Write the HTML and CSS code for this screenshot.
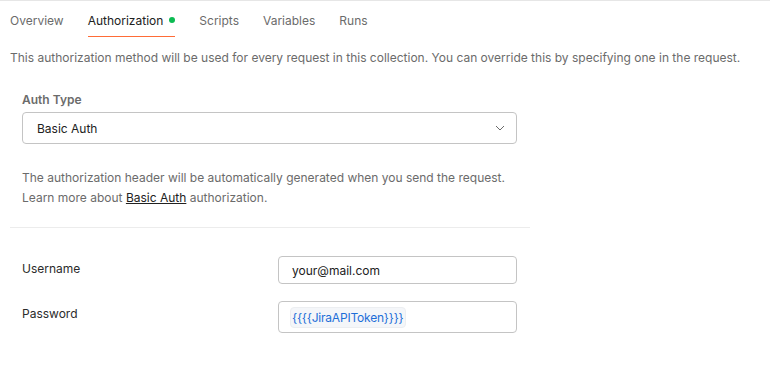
FILE: index.html
```html
<!DOCTYPE html>
<html lang="en">
<head>
  <meta charset="UTF-8">
  <title>Collection Authorization</title>
  <link rel="stylesheet" href="styles.css">
</head>
<body>
  <nav class="tabs">
    <a class="tab">Overview</a>
    <a class="tab active">Authorization <span class="dot"></span></a>
    <a class="tab">Scripts</a>
    <a class="tab">Variables</a>
    <a class="tab">Runs</a>
  </nav>

  <p class="intro">This authorization method will be used for every request in this collection. You can override this by specifying one in the request.</p>

  <section class="auth-type">
    <label class="field-label">Auth Type</label>
    <div class="select">
      <span>Basic Auth</span>
      <svg width="10" height="6" viewBox="0 0 10 6"><path d="M1 1l4 4 4-4" fill="none" stroke="#6b6b6b" stroke-width="1"/></svg>
    </div>
    <p class="help">The authorization header will be automatically generated when you send the request.<br>Learn more about <a href="#">Basic Auth</a> authorization.</p>
  </section>

  <hr class="divider">

  <section class="fields">
    <div class="row">
      <span class="row-label">Username</span>
      <div class="input">your@mail.com</div>
    </div>
    <div class="row">
      <span class="row-label">Password</span>
      <div class="input tall"><span class="var">{{{{JiraAPIToken}}}}</span></div>
    </div>
  </section>
</body>
</html>
```

FILE: styles.css
```css
/* Base */
body {
  margin: 0;
  font-family: 'Inter', 'Noto Sans', sans-serif;
  font-size: 12px;
  color: #6b6b6b;
  background: #fff;
  border-top: 1px solid #e6e6e6;
}

/* Tabs */
.tabs {
  display: flex;
  gap: 24px;
  padding: 0 10px;
  height: 36px;
}
.tab {
  display: flex;
  align-items: center;
  gap: 6px;
  height: 100%;
  box-sizing: border-box;
  padding-top: 3px;
  color: #6b6b6b;
  cursor: pointer;
  border-bottom: 1px solid transparent;
}
.tab.active {
  color: #212121;
  border-bottom-color: #ff6c37;
}
.dot {
  width: 6px;
  height: 6px;
  border-radius: 50%;
  background: #0cbb52;
}

.intro {
  margin: 12px 10px 0;
  line-height: 18px;
}

/* Auth type */
.auth-type {
  padding: 0 22px;
  margin-top: 25px;
  width: 495px;
}
.field-label {
  display: block;
  font-weight: 600;
  line-height: 16px;
  margin-bottom: 4px;
}
.select {
  display: flex;
  justify-content: space-between;
  align-items: center;
  height: 32px;
  box-sizing: border-box;
  border: 1px solid #c4c4c4;
  border-radius: 4px;
  padding: 0 11px 0 14px;
  color: #212121;
}
.help {
  margin: 24px 0 0;
  line-height: 20px;
}
.help a {
  color: #212121;
  text-decoration: underline;
}

.divider {
  border: none;
  border-top: 1px solid #ececec;
  width: 520px;
  margin: 19px 0 0 10px;
}

/* Fields */
.fields {
  padding: 0 22px;
  width: 495px;
  margin-top: 28px;
  display: flex;
  flex-direction: column;
  gap: 17px;
}
.row {
  display: flex;
  align-items: flex-start;
}
.row-label {
  width: 256px;
  line-height: 16px;
  padding-top: 5px;
  color: #2b2b2b;
}
.input {
  flex: 1;
  height: 28px;
  box-sizing: border-box;
  border: 1px solid #c4c4c4;
  border-radius: 4px;
  padding: 0 11px 0 13px;
  display: flex;
  align-items: center;
  color: #212121;
}
.input.tall {
  height: 32px;
  padding-left: 11px;
}
.var {
  color: #1d6ed8;
  background: #f4f6f9;
  border: 1px solid #eceef1;
  border-radius: 4px;
  padding: 2px 1px;
  letter-spacing: -0.2px;
}
```
